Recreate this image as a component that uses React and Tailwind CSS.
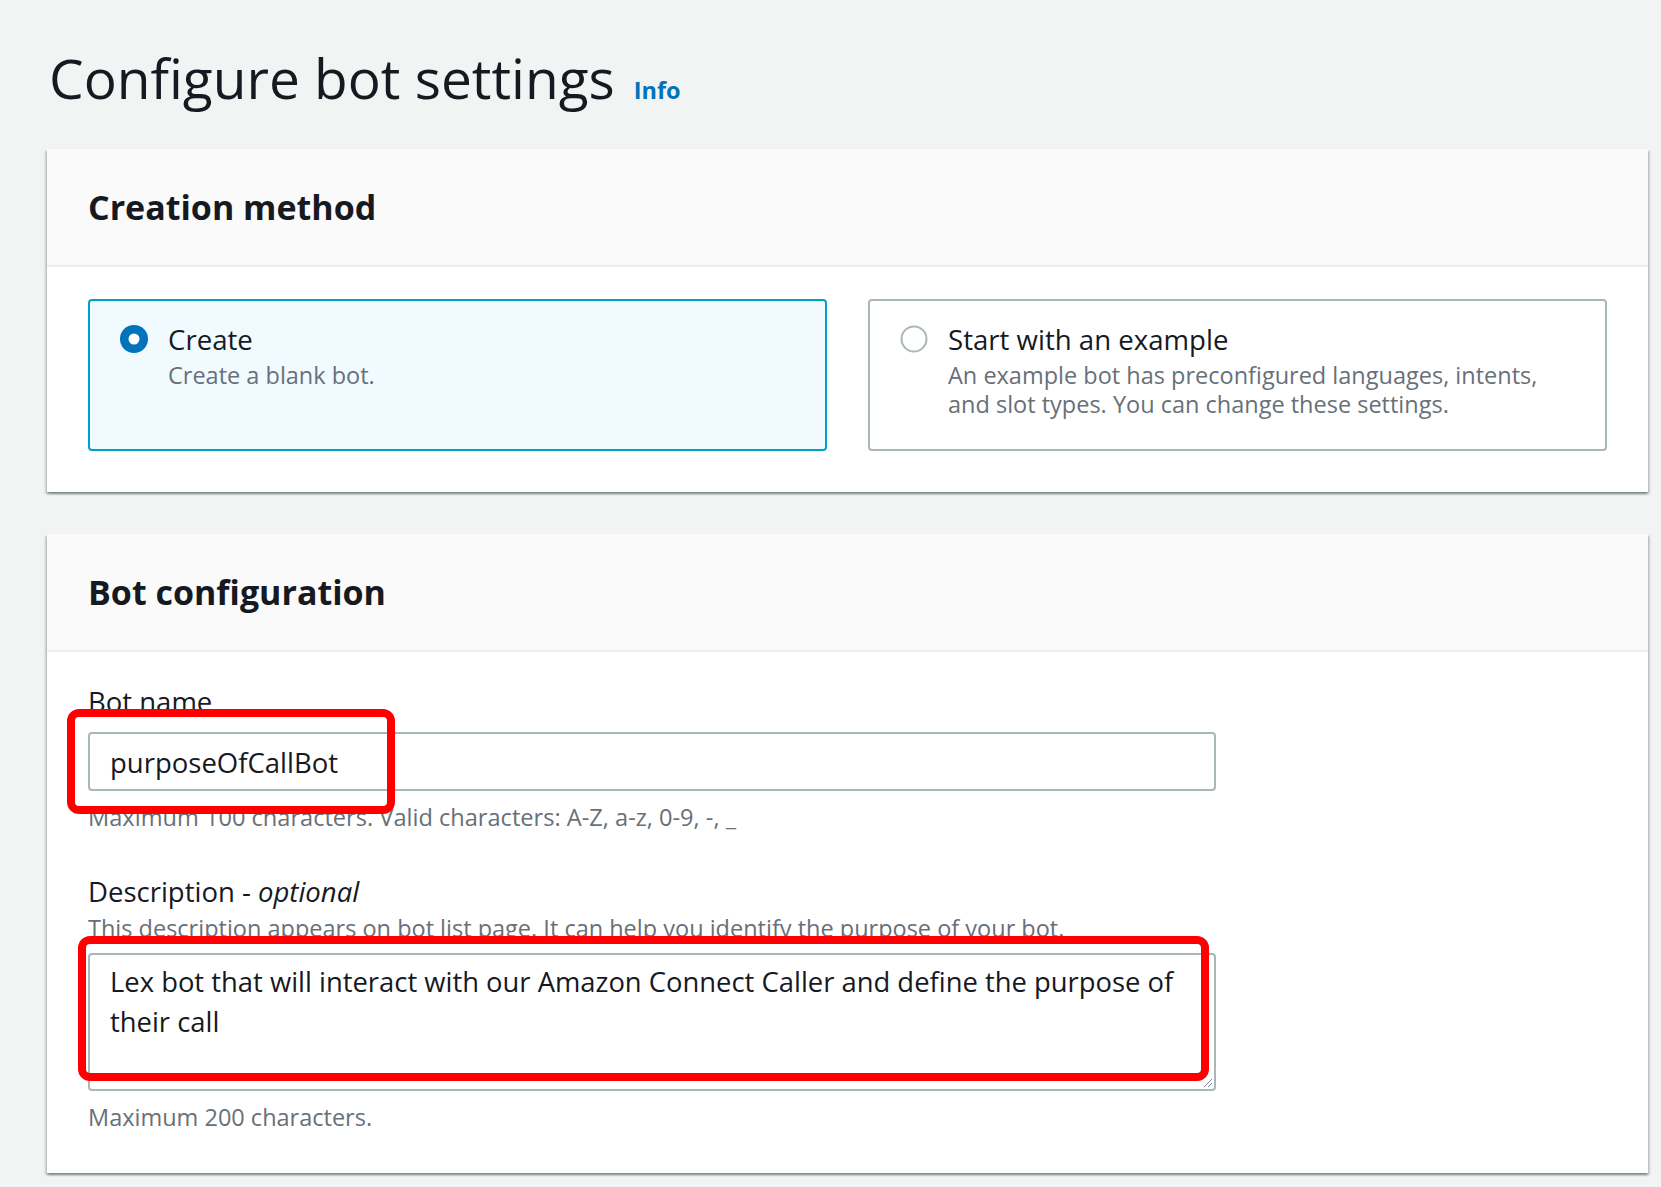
import React from 'react';

const font = "font-['Open_Sans','Liberation_Sans',sans-serif]";

const Radio = ({ checked }) =>
  checked ? (
    <svg width="28" height="28" viewBox="0 0 28 28">
      <circle cx="14" cy="14" r="14" fill="#0073bb" />
      <circle cx="14" cy="14" r="5.5" fill="#ffffff" />
    </svg>
  ) : (
    <svg width="28" height="28" viewBox="0 0 28 28">
      <circle cx="14" cy="14" r="12.5" fill="#ffffff" stroke="#aab7b8" strokeWidth="2" />
    </svg>
  );

const Tile = ({ checked, label, children }) => (
  <div
    className={
      checked
        ? 'h-[152px] rounded-[4px] border-2 border-[#00a1c9] bg-[#f1faff] pl-[30px] pt-[19px]'
        : 'h-[152px] rounded-[4px] border-2 border-[#aab7b8] bg-white pl-[30px] pt-[19px]'
    }
  >
    <div className="flex gap-[20px]">
      <div className="flex h-[38px] items-center">
        <Radio checked={checked} />
      </div>
      <div>
        <div className="text-[27.6px] leading-[38px] text-[#16191f]">{label}</div>
        <div className="mt-[3px] text-[23.5px] leading-[29px] text-[#687078]">{children}</div>
      </div>
    </div>
  </div>
);

const Card = ({ title, children, className = '' }) => (
  <div
    className={
      'relative w-[1601px] bg-white shadow-[0_2px_2px_0_rgba(0,28,36,0.3),2px_2px_2px_0_rgba(0,28,36,0.15),-2px_2px_2px_0_rgba(0,28,36,0.15)] ' +
      className
    }
  >
    <div className="flex h-[118px] items-center border-b-2 border-[#eaeded] bg-[#fafafa] pl-[41px] pr-10">
      <h2 className="text-[34px] font-bold leading-[40px] text-[#16191f]">{title}</h2>
    </div>
    {children}
  </div>
);

export default function App() {
  return (
    <div className={`min-h-screen bg-[#f2f3f3] pl-[47px] pt-[46px] ${font} text-[#16191f]`}>
      <div className="mb-[39px] ml-[2px] flex items-baseline gap-[19px]">
        <h1 className="text-[55px] font-normal leading-[64px]">Configure bot settings</h1>
        <span className="text-[23.5px] font-bold text-[#0073bb]">Info</span>
      </div>

      <Card title="Creation method">
        <div className="grid grid-cols-2 gap-[41px] px-[41px] pb-[41px] pt-8">
          <Tile checked label="Create">
            Create a blank bot.
          </Tile>
          <Tile label="Start with an example">
            An example bot has preconfigured languages, intents,
            <br />
            and slot types. You can change these settings.
          </Tile>
        </div>
      </Card>

      <Card title="Bot configuration" className="mt-[42px]">
        <div className="px-[41px] pb-10 pt-[30px]">
          <div className="text-[27.5px] leading-[40px]">Bot name</div>
          <div className="mt-[10px] flex h-[59px] w-[1128px] items-center rounded-[4px] border-2 border-[#aab7b8] pl-[20px] pt-[3px] text-[27.5px] leading-[40px]">
            purposeOfCallBot
          </div>
          <div className="mt-[10px] text-[23.6px] leading-[32px] text-[#687078]">
            Maximum 100 characters. Valid characters: A-Z, a-z, 0-9, -, _
          </div>

          <div className="mt-[39px] text-[27.5px] leading-[40px]">
            Description - <i>optional</i>
          </div>
          <div className="text-[23.5px] leading-[32px] text-[#687078]">
            This description appears on bot list page. It can help you identify the purpose of your bot.
          </div>
          <div className="relative mt-[9px] h-[138px] w-[1128px] rounded-[4px] border-2 border-[#aab7b8] pl-[20px] pt-[7px] text-[27.4px] leading-[40px]">
            <div className="whitespace-nowrap">
              Lex bot that will interact with our Amazon Connect Caller and define the purpose of
            </div>
            <div>their call</div>
            <svg className="absolute bottom-[1px] right-[1px]" width="12" height="12" viewBox="0 0 12 12">
              <path d="M11 3 L3 11 M11 7 L7 11" stroke="#7d8998" strokeWidth="1" />
            </svg>
          </div>
          <div className="mt-[10px] text-[23.5px] leading-[32px] text-[#687078]">Maximum 200 characters.</div>
        </div>

        {/* annotation boxes */}
        <div className="absolute left-[20px] top-[175px] h-[105px] w-[328px] rounded-[12px] border-[8px] border-[#ff0000]" />
        <div className="absolute left-[31px] top-[402px] h-[145px] w-[1131px] rounded-[12px] border-[8px] border-[#ff0000]" />
      </Card>
    </div>
  );
}
